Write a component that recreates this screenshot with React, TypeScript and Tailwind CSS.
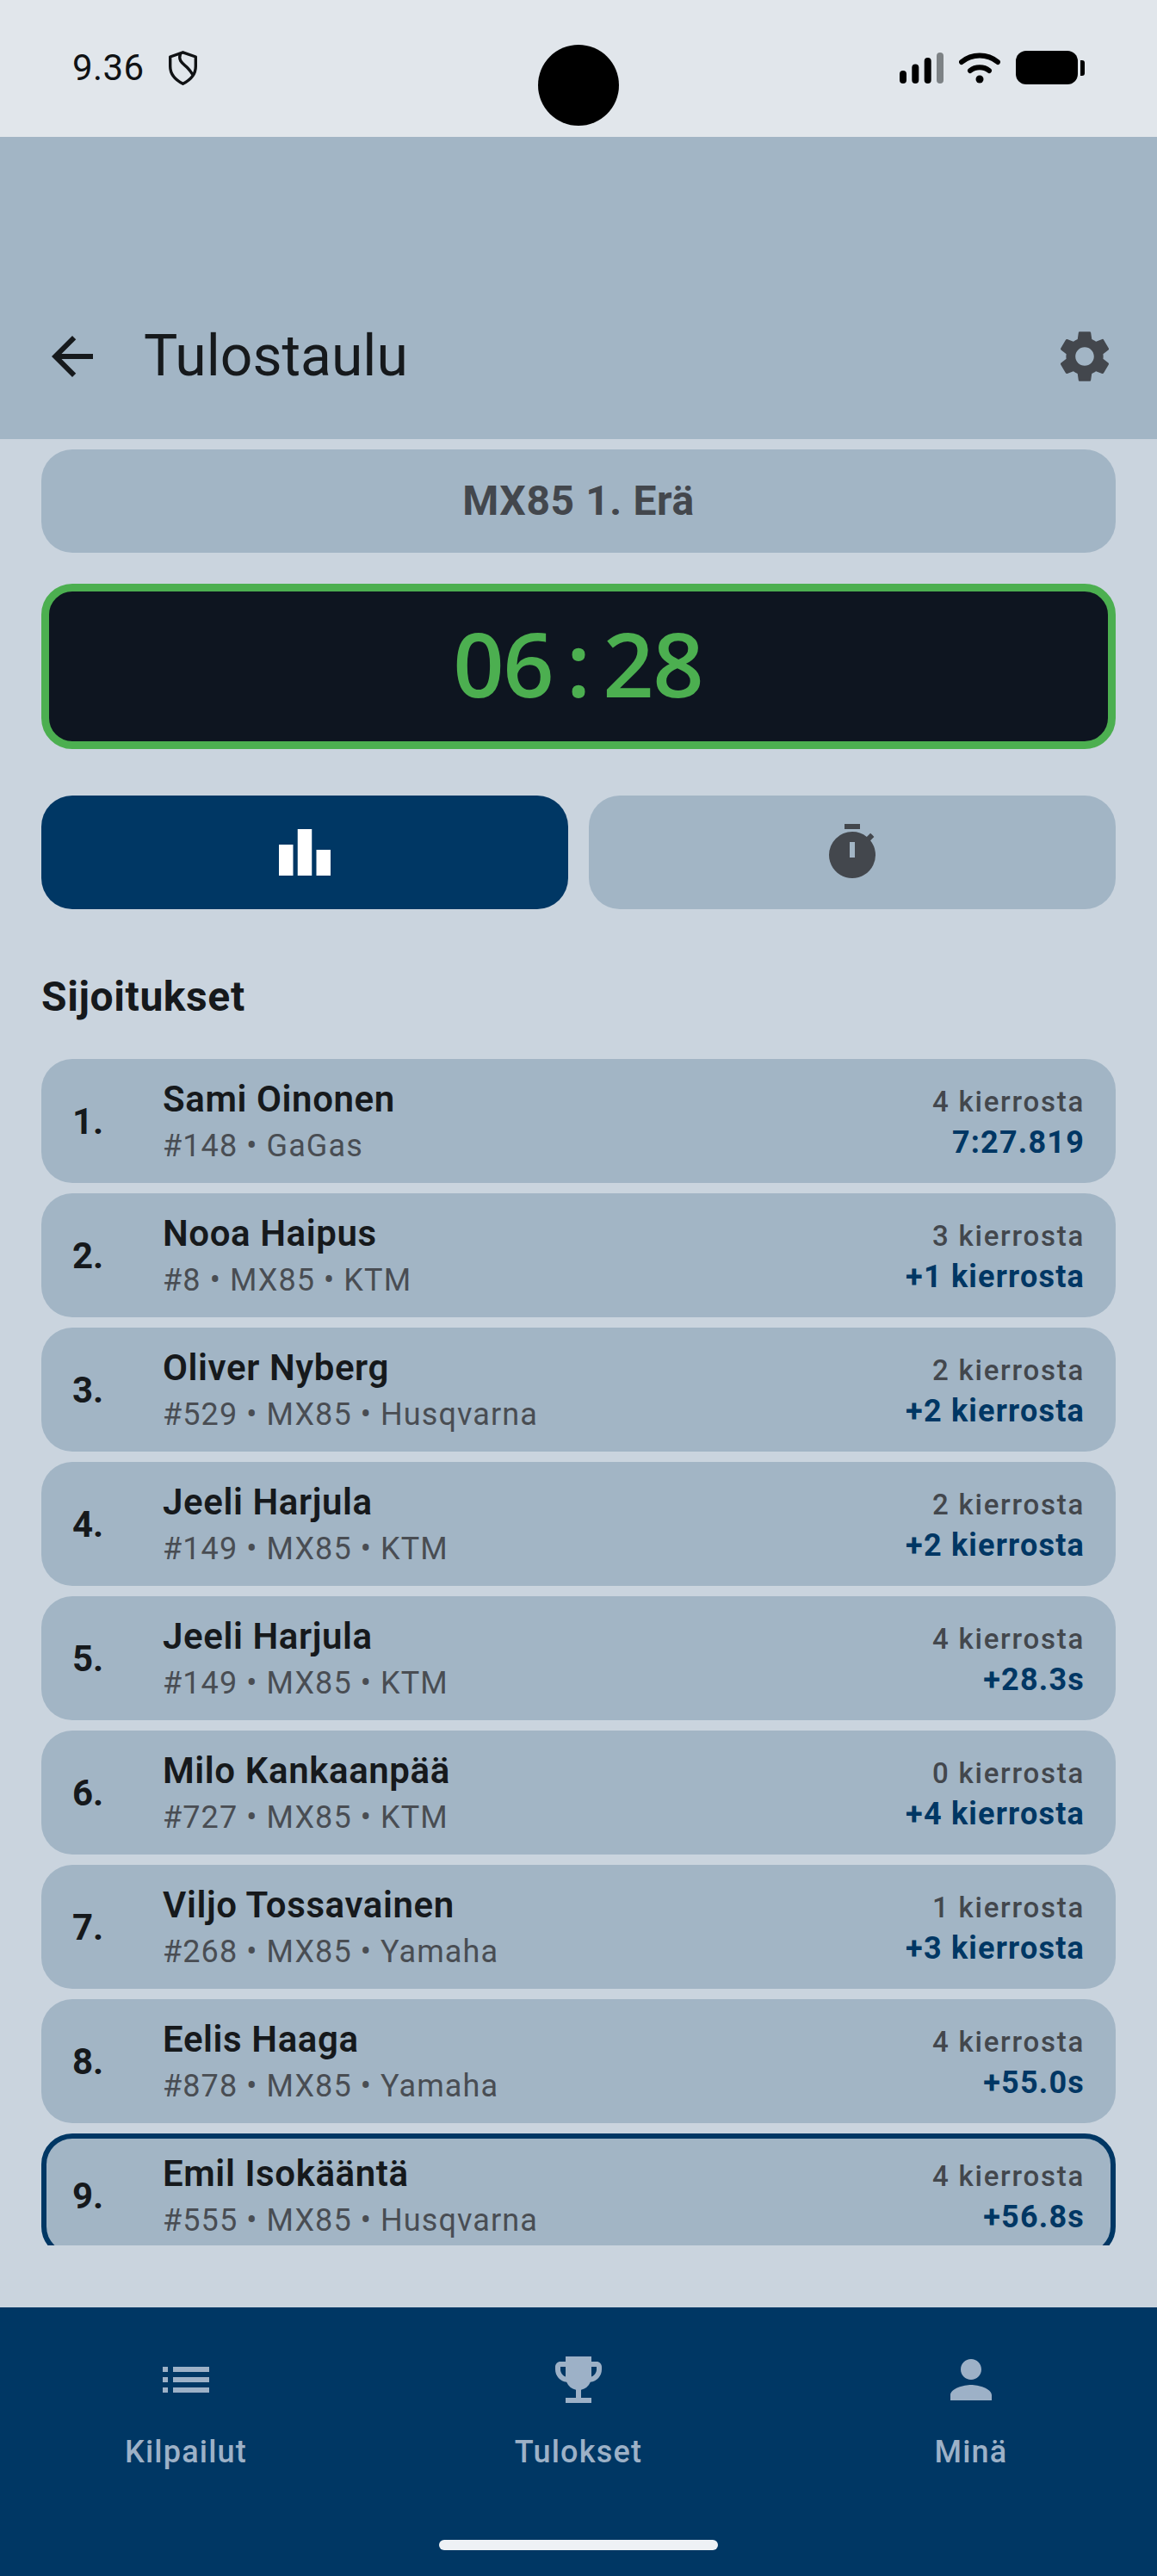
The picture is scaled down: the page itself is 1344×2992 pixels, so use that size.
import React from "react";
import { MdArrowBack, MdSettings, MdLeaderboard, MdTimer, MdList, MdEmojiEvents, MdPerson } from "react-icons/md";

const font = { fontFamily: "Roboto, sans-serif" };

const rows = [
  { pos: "1.", name: "Sami Oinonen", sub: "#148 • GaGas", laps: "4 kierrosta", gap: "7:27.819" },
  { pos: "2.", name: "Nooa Haipus", sub: "#8 • MX85 • KTM", laps: "3 kierrosta", gap: "+1 kierrosta" },
  { pos: "3.", name: "Oliver Nyberg", sub: "#529 • MX85 • Husqvarna", laps: "2 kierrosta", gap: "+2 kierrosta" },
  { pos: "4.", name: "Jeeli Harjula", sub: "#149 • MX85 • KTM", laps: "2 kierrosta", gap: "+2 kierrosta" },
  { pos: "5.", name: "Jeeli Harjula", sub: "#149 • MX85 • KTM", laps: "4 kierrosta", gap: "+28.3s" },
  { pos: "6.", name: "Milo Kankaanpää", sub: "#727 • MX85 • KTM", laps: "0 kierrosta", gap: "+4 kierrosta" },
  { pos: "7.", name: "Viljo Tossavainen", sub: "#268 • MX85 • Yamaha", laps: "1 kierrosta", gap: "+3 kierrosta" },
  { pos: "8.", name: "Eelis Haaga", sub: "#878 • MX85 • Yamaha", laps: "4 kierrosta", gap: "+55.0s" },
  { pos: "9.", name: "Emil Isokääntä", sub: "#555 • MX85 • Husqvarna", laps: "4 kierrosta", gap: "+56.8s", own: true },
];

function StatusBar() {
  return (
    <div className="relative flex h-[159px] items-start justify-between bg-[#e1e6eb] pl-[84px] pr-[84px] pt-[55px]">
      <div className="flex items-center gap-[28px]">
        <span className="text-[42px] leading-[48px] tracking-[0.4px] text-[#101214]">9.36</span>
        <svg width="33" height="40" viewBox="0 0 33 40" fill="none" stroke="#101214" strokeWidth="3.4">
          <path d="M16.5 1.8 L31.3 7 V18 C31.3 27 25 34 16.5 38.2 C8 34 1.7 27 1.7 18 V7 Z" strokeLinejoin="round" />
          <path d="M13.5 3.5 C10.5 12 17 15 22 20 C25 23 26.5 25.5 28 28" />
        </svg>
      </div>
      <div className="absolute left-[625px] top-[52px] h-[94px] w-[94px] rounded-full bg-black" />
      <div className="flex items-center gap-[18px] pt-[4px]">
        <svg width="51" height="36" viewBox="0 0 51 36">
          <rect x="0" y="21" width="8" height="15" rx="4" fill="#000" />
          <rect x="14.3" y="13.6" width="8" height="22.4" rx="4" fill="#000" />
          <rect x="28.7" y="6" width="8" height="30" rx="4" fill="#000" />
          <rect x="43" y="0" width="8" height="36" rx="4" fill="#7d8285" />
        </svg>
        <svg width="48" height="36" viewBox="0 0 48 36" fill="none" stroke="#000" strokeWidth="6" strokeLinecap="round">
          <path d="M3 11 C15 1 33 1 45 11" />
          <path d="M13 21 C19 16 29 16 35 21" />
          <circle cx="24" cy="31" r="4.5" fill="#000" stroke="none" />
        </svg>
        <div className="flex items-center gap-[3px]">
          <div className="h-[39px] w-[72px] rounded-[12px] bg-black" />
          <div className="h-[18px] w-[5px] rounded-r-[3px] bg-black" />
        </div>
      </div>
    </div>
  );
}

function Row({ pos, name, sub, laps, gap, own }: (typeof rows)[number]) {
  return (
    <div
      className={
        own
          ? "flex h-[144px] shrink-0 items-center rounded-[36px] border-[6px] border-[#003764] bg-[#a2b5c5] px-[30px]"
          : "flex h-[144px] shrink-0 items-center rounded-[36px] bg-[#a2b5c5] px-[36px]"
      }
    >
      <div className="w-[105px] text-[42px] font-bold text-[#16191c]">{pos}</div>
      <div className="flex-1 pt-[4px]">
        <div className="text-[42px] leading-[54px] font-semibold tracking-[0.6px] text-[#16191c]">{name}</div>
        <div className="text-[36px] leading-[54px] tracking-[1.1px] text-[#494d53]">{sub}</div>
      </div>
      <div className="flex flex-col items-end pt-[2px]">
        <div className="text-[33px] leading-[48px] font-medium tracking-[1.75px] text-[#43474d]">{laps}</div>
        <div className="text-[36px] leading-[46px] font-bold tracking-[1.2px] text-[#003764]">{gap}</div>
      </div>
    </div>
  );
}

function NavItem({ icon, label }: { icon: React.ReactNode; label: string }) {
  return (
    <div className="flex w-[432px] flex-col items-center">
      <div className="flex h-[72px] items-center justify-center text-[#9db1c7]">{icon}</div>
      <div className="mt-[24px] text-[36px] leading-[48px] font-medium tracking-[1.2px] text-[#9db1c7]">{label}</div>
    </div>
  );
}

const clock = ["0", "6", ":", "2", "8"];

export default function App() {
  return (
    <div className="flex h-[2992px] w-[1344px] flex-col overflow-hidden bg-[#cad4de]" style={font}>
      <StatusBar />
      <div className="flex h-[351px] items-end justify-between bg-[#a2b5c5] pb-[60px] pl-[48px] pr-[48px]">
        <div className="flex items-center">
          <MdArrowBack size={72} color="#16191c" />
          <div className="ml-[47px] text-[66px] leading-[72px] text-[#16191c]">Tulostaulu</div>
        </div>
        <MdSettings size={72} color="#43474d" />
      </div>

      <div className="flex flex-1 flex-col px-[48px] pt-[12px]">
        <div className="flex h-[120px] items-center justify-center rounded-[36px] bg-[#a2b5c5] text-[48px] font-bold tracking-[0.6px] text-[#43474d]">
          MX85 1. Erä
        </div>
        <div className="mt-[36px] flex h-[192px] items-center justify-center rounded-[36px] border-[9px] border-[#4caf50] bg-[#0e1520] pb-[8px] text-[#4caf50]">
          {clock.map((c, i) => (
            <div
              key={i}
              className="flex w-[58px] justify-center text-[104px] leading-[120px] font-semibold"
              style={{ fontFamily: "'Open Sans', sans-serif" }}
            >
              {c}
            </div>
          ))}
        </div>
        <div className="mt-[54px] flex gap-[24px]">
          <div className="flex h-[132px] flex-1 items-center justify-center rounded-[36px] bg-[#003764]">
            <MdLeaderboard size={72} color="#fff" />
          </div>
          <div className="flex h-[132px] flex-1 items-center justify-center rounded-[36px] bg-[#a2b5c5]">
            <MdTimer size={72} color="#43474d" />
          </div>
        </div>
        <div className="mt-[72px] text-[48px] leading-[60px] font-bold tracking-[0.6px] text-[#16191c]">Sijoitukset</div>
        <div className="mt-[42px] flex h-[1378px] flex-col gap-[12px] overflow-hidden">
          {rows.map((r) => (
            <Row key={r.pos} {...r} />
          ))}
        </div>
      </div>

      <div className="flex h-[312px] flex-col bg-[#003764]">
        <div className="flex justify-between pt-[48px]">
          <NavItem icon={<MdList size={72} />} label="Kilpailut" />
          <NavItem icon={<MdEmojiEvents size={72} />} label="Tulokset" />
          <NavItem icon={<MdPerson size={72} />} label="Minä" />
        </div>
        <div className="mt-auto mb-[30px] h-[12px] w-[324px] self-center rounded-full bg-[#eef1f5]" />
      </div>
    </div>
  );
}
